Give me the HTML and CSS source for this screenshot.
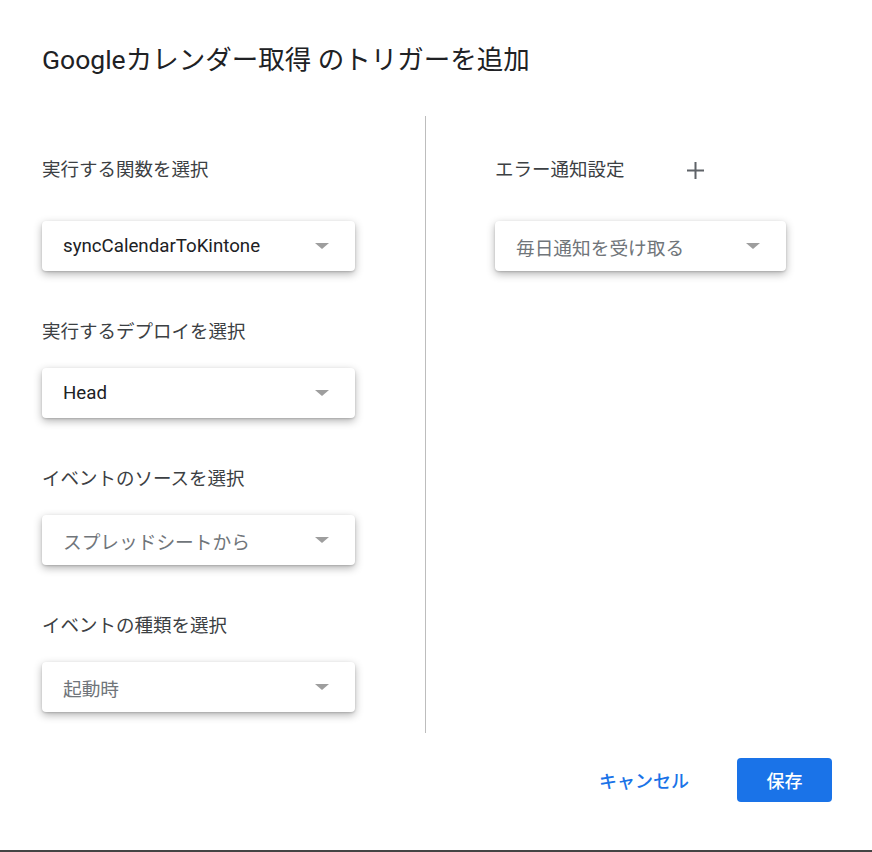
FILE: index.html
```html
<!DOCTYPE html>
<html lang="ja">
<head>
    <meta charset="UTF-8">
    <meta name="viewport" content="width=device-width, initial-scale=1.0">
    <title>トリガーを追加</title>
    <link rel="stylesheet" href="styles.css">
</head>
<body>

    <!-- Add trigger dialog -->
    <div class="dialog">
        <h1 class="dialog-title">Googleカレンダー取得 のトリガーを追加</h1>

        <div class="dialog-body">
            <div class="col col-left">
                <div class="field">
                    <div class="field-label first">実行する関数を選択</div>
                    <div class="select">
                        <span class="select-value">syncCalendarToKintone</span>
                        <span class="arrow"></span>
                    </div>
                </div>
                <div class="field">
                    <div class="field-label">実行するデプロイを選択</div>
                    <div class="select">
                        <span class="select-value">Head</span>
                        <span class="arrow"></span>
                    </div>
                </div>
                <div class="field">
                    <div class="field-label">イベントのソースを選択</div>
                    <div class="select">
                        <span class="select-value muted">スプレッドシートから</span>
                        <span class="arrow"></span>
                    </div>
                </div>
                <div class="field">
                    <div class="field-label">イベントの種類を選択</div>
                    <div class="select">
                        <span class="select-value muted">起動時</span>
                        <span class="arrow"></span>
                    </div>
                </div>
            </div>

            <div class="divider"></div>

            <div class="col col-right">
                <div class="field">
                    <div class="field-label first">
                        エラー通知設定
                        <button class="icon-btn" title="追加">
                            <svg width="19" height="19" viewBox="0 0 19 19">
                                <path d="M9.5 1v17M1 9.5h17" stroke="#5f6368" stroke-width="2" fill="none"/>
                            </svg>
                        </button>
                    </div>
                    <div class="select select-wide">
                        <span class="select-value muted">毎日通知を受け取る</span>
                        <span class="arrow"></span>
                    </div>
                </div>
            </div>
        </div>

        <div class="dialog-footer">
            <button class="btn-text">キャンセル</button>
            <button class="btn-primary">保存</button>
        </div>
    </div>

</body>
</html>
```

FILE: styles.css
```css
body {
    margin: 0;
    background: #fff;
    font-family: Roboto, "Noto Sans CJK JP", sans-serif;
    color: #202124;
}
.dialog {
    height: 850px;
    border-bottom: 2px solid #444;
    display: flex;
    flex-direction: column;
}
.dialog-title {
    margin: 43px 0 0 42px;
    font-size: 26.5px;
    line-height: 34px;
    font-weight: 400;
    color: #202124;
}
.dialog-body {
    display: flex;
    margin-top: 39px;
    height: 617px;
}
.col {
    padding-top: 27px;
}
.col-left {
    width: 383px;
    padding-left: 42px;
}
.col-right {
    padding-left: 69px;
}
.divider {
    width: 1px;
    background: #bdbdbd;
}
.field {
    margin-bottom: 49px;
}
.field-label {
    font-size: 18.5px;
    line-height: 24px;
    color: #3c4043;
    margin-bottom: 24px;
}
.field-label.first {
    height: 54px;
    display: flex;
    align-items: center;
}
.icon-btn {
    width: 48px;
    height: 48px;
    margin-left: 47px;
    border: none;
    background: none;
    padding: 0;
    display: flex;
    align-items: center;
    justify-content: center;
    cursor: pointer;
}
.select {
    width: 313px;
    height: 50px;
    box-sizing: border-box;
    border-radius: 4px;
    background: #fff;
    box-shadow: 0 3px 8px rgba(0, 0, 0, 0.3), 0 1px 2px rgba(0, 0, 0, 0.15);
    display: flex;
    align-items: center;
    justify-content: space-between;
    padding: 0 26px 0 21px;
}
.select-wide {
    width: 291px;
}
.select-value {
    font-size: 18.7px;
    color: #202124;
}
.select-value.muted {
    color: #70757a;
}
.arrow {
    width: 0;
    height: 0;
    border-left: 7px solid transparent;
    border-right: 7px solid transparent;
    border-top: 6px solid #9e9e9e;
}
.dialog-footer {
    display: flex;
    justify-content: flex-end;
    align-items: center;
    margin-top: 25px;
    padding-right: 40px;
    gap: 24px;
}
.btn-text,
.btn-primary {
    height: 44px;
    border: none;
    border-radius: 4px;
    font-family: Roboto, "Noto Sans CJK JP", sans-serif;
    font-size: 18px;
    font-weight: 500;
    cursor: pointer;
}
.btn-text {
    background: none;
    color: #1a73e8;
    padding: 0 24px;
}
.btn-primary {
    width: 95px;
    background: #1a73e8;
    color: #fff;
}
```
